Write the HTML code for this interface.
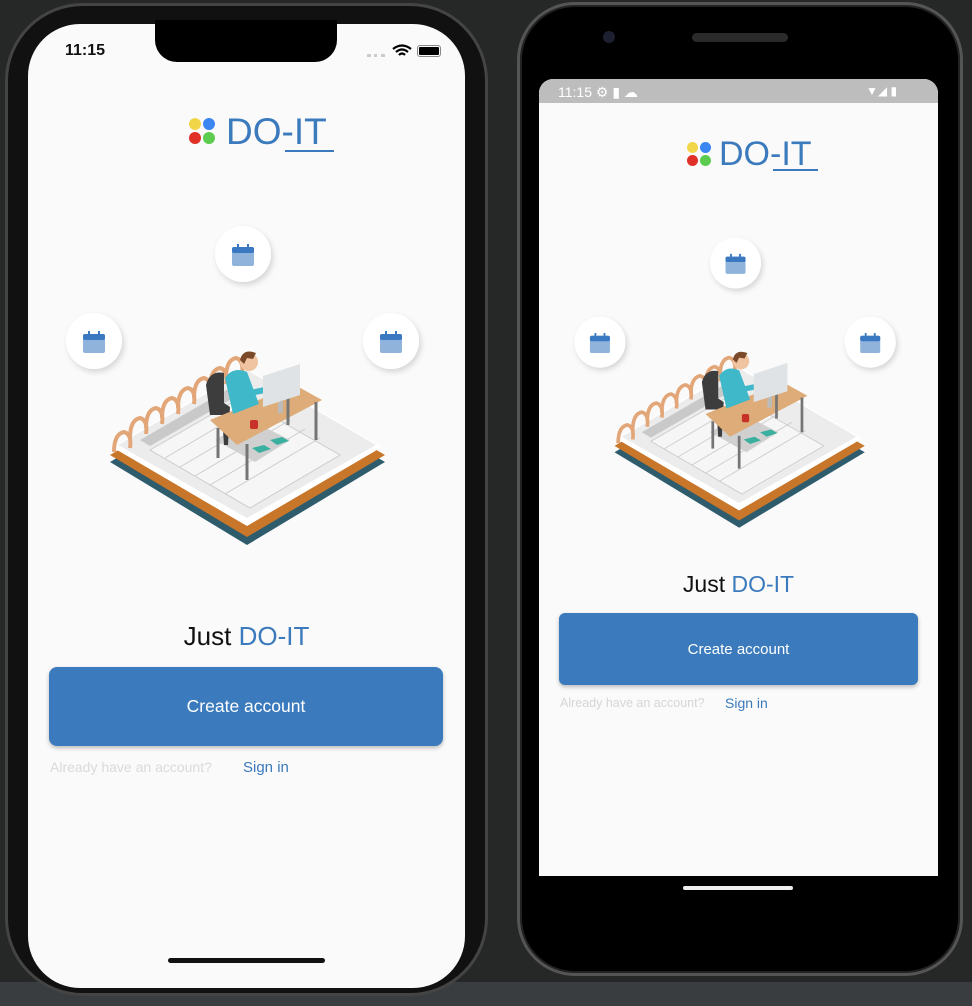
<!DOCTYPE html>
<html><head><meta charset="utf-8"><style>
*{margin:0;padding:0;box-sizing:border-box}
body{width:972px;height:1006px;background:#262727;position:relative;overflow:hidden;font-family:"Liberation Sans",sans-serif}
.a{position:absolute}
.btn{position:absolute;background:#3b7abc;color:#fff;display:flex;align-items:center;justify-content:center;font-weight:500;box-shadow:0 2px 4px rgba(0,0,0,.25)}
.blue{color:#3b7abc}
</style></head><body>
<div class="a" style="left:0;top:982px;width:972px;height:24px;background:#3a3d40"></div>
<!-- iPhone -->
<div class="a" style="left:5px;top:3px;width:483px;height:993px;border-radius:78px;background:#111;border:3px solid #444"></div>
<div class="a" style="left:28px;top:24px;width:437px;height:964px;border-radius:52px;background:#fafafa"></div>
<div class="a" style="left:155px;top:20px;width:182px;height:42px;background:#000;border-radius:0 0 22px 22px"></div>
<div class="a" style="left:65px;top:42px;font-size:16px;font-weight:bold;color:#111">11:15</div>
<div class="a" style="left:367px;top:54px;width:18px;height:3px;border-top:3px dotted #ccc"></div>
<svg class="a" style="left:392px;top:44px" width="20" height="14" viewBox="0 0 20 14"><path d="M1 5 Q10 -2 19 5 M4 8 Q10 3 16 8 M7 11 Q10 8 13 11" stroke="#000" stroke-width="2.2" fill="none"/></svg>
<div class="a" style="left:417px;top:45px;width:24px;height:12px;border:1.5px solid #888;border-radius:3px;padding:1px"><div style="width:100%;height:100%;background:#000;border-radius:1px"></div></div>
<div class="a" style="left:189px;top:118px;width:12px;height:12px;border-radius:50%;background:#f2d64a"></div>
<div class="a" style="left:203px;top:118px;width:12px;height:12px;border-radius:50%;background:#3b86f0"></div>
<div class="a" style="left:189px;top:132px;width:12px;height:12px;border-radius:50%;background:#e03128"></div>
<div class="a" style="left:203px;top:132px;width:12px;height:12px;border-radius:50%;background:#5ccc4e"></div>
<div class="a blue" style="left:226px;top:111px;font-size:37px;letter-spacing:0px">DO-IT</div>
<div class="a" style="left:285px;top:150px;width:49px;height:2px;background:#3b7abc"></div>
<div class="a" style="left:0;top:621px;width:493px;text-align:center;font-size:26px;color:#111">Just <span class="blue">DO-IT</span></div>
<div class="btn" style="left:49px;top:667px;width:394px;height:79px;border-radius:8px;font-size:17.5px">Create account</div>
<div class="a" style="left:50px;top:759px;font-size:14px;color:#dadada">Already have an account?</div>
<div class="a blue" style="left:243px;top:759px;font-size:15px">Sign in</div>
<div class="a" style="left:168px;top:958px;width:157px;height:5px;border-radius:3px;background:#111"></div>
<!-- Android -->
<div class="a" style="left:517px;top:2px;width:446px;height:974px;border-radius:58px;background:#000;border:3px solid #555;box-shadow:inset 0 0 0 2px #222"></div>
<div class="a" style="left:603px;top:31px;width:12px;height:12px;border-radius:50%;background:#1d2030"></div>
<div class="a" style="left:692px;top:33px;width:96px;height:9px;border-radius:5px;background:#2a2a2a"></div>
<div class="a" style="left:539px;top:79px;width:399px;height:797px;background:#fafafa;border-radius:14px 14px 0 0"></div>
<div class="a" style="left:539px;top:79px;width:399px;height:24px;background:#bdbdbd;border-radius:14px 14px 0 0"></div>
<div class="a" style="left:558px;top:84px;font-size:14px;color:#fff">11:15 ⚙ ▮ ☁</div>
<div class="a" style="left:866px;top:84px;font-size:12px;color:#fff">▼◢ ▮</div>
<div class="a" style="left:687px;top:142px;width:11px;height:11px;border-radius:50%;background:#f2d64a"></div>
<div class="a" style="left:700px;top:142px;width:11px;height:11px;border-radius:50%;background:#3b86f0"></div>
<div class="a" style="left:687px;top:155px;width:11px;height:11px;border-radius:50%;background:#e03128"></div>
<div class="a" style="left:700px;top:155px;width:11px;height:11px;border-radius:50%;background:#5ccc4e"></div>
<div class="a blue" style="left:719px;top:135px;font-size:34px">DO-IT</div>
<div class="a" style="left:773px;top:169px;width:45px;height:2px;background:#3b7abc"></div>
<div class="a" style="left:539px;top:571px;width:399px;text-align:center;font-size:23px;color:#111">Just <span class="blue">DO-IT</span></div>
<div class="btn" style="left:559px;top:613px;width:359px;height:72px;border-radius:6px;font-size:15px">Create account</div>
<div class="a" style="left:560px;top:696px;font-size:12.5px;color:#d6d6d6">Already have an account?</div>
<div class="a blue" style="left:725px;top:695px;font-size:14px">Sign in</div>
<div class="a" style="left:683px;top:886px;width:110px;height:4px;border-radius:2px;background:#eee"></div>
<svg class="a" style="left:0;top:0" width="972" height="1006">
<defs>
<filter id="sh" x="-50%" y="-50%" width="200%" height="200%"><feDropShadow dx="2" dy="3" stdDeviation="3" flood-opacity="0.15"/></filter>
<g id="cal"><rect x="-11" y="-8" width="22" height="19" rx="2" fill="#8fb3db"/><rect x="-11" y="-8" width="22" height="6" rx="2" fill="#3a78c2"/><rect x="-6" y="-11" width="2" height="5" fill="#3a78c2"/><rect x="4" y="-11" width="2" height="5" fill="#3a78c2"/></g>
<g id="ill">
<circle cx="243" cy="254" r="28" fill="#fff" filter="url(#sh)"/><use href="#cal" x="243" y="255"/>
<circle cx="94" cy="341" r="28" fill="#fff" filter="url(#sh)"/><use href="#cal" x="94" y="342"/>
<circle cx="391" cy="341" r="28" fill="#fff" filter="url(#sh)"/><use href="#cal" x="391" y="342"/>
<polygon points="110,462 247,382 385,462 247,545" fill="#2f5c6c"/>
<polygon points="110,455 247,375 385,455 247,537" fill="#c8762a"/>
<polygon points="112,447 247,368 382,447 247,526" fill="#fff"/>
<polygon points="118,445 247,370 376,445 247,518" fill="#ececec"/>
<polygon points="150,450 240,398 340,455 250,508" fill="#f6f6f6" stroke="#ccc" stroke-width="1"/>
<g stroke="#ccc" stroke-width="1"><line x1="165" y1="458" x2="260" y2="402"/><line x1="180" y1="467" x2="275" y2="411"/><line x1="195" y1="476" x2="290" y2="420"/><line x1="210" y1="485" x2="305" y2="429"/><line x1="225" y1="494" x2="320" y2="438"/></g>
<polygon points="140,440 230,388 240,394 150,446" fill="#c9c9c9"/>
<polygon points="215,440 250,420 290,440 255,462" fill="#d0d0d0"/>
<g fill="none" stroke="#e2a679" stroke-width="4"><path d="M114 452 q0-18 10-20 q8 2 6 16"/><path d="M130 438 q0-18 10-20 q8 2 6 16"/><path d="M146 428 q0-18 10-20 q8 2 6 16"/><path d="M162 418 q0-18 10-20 q8 2 6 16"/><path d="M178 408 q0-18 10-20 q8 2 6 16"/><path d="M194 398 q0-18 10-20 q8 2 6 16"/><path d="M210 388 q0-18 10-20 q8 2 6 16"/><path d="M226 378 q0-18 10-20 q8 2 6 16"/></g>
<path d="M206 385 q4-15 18-12 l0 30 l6 4 l-2 38 l-4 0 l-2 -30 l-12 0 z" fill="#3d3d3d"/>
<polygon points="210,420 295,385 322,400 237,445" fill="#ddac78"/>
<g stroke="#757575" stroke-width="3"><line x1="218" y1="428" x2="218" y2="458"/><line x1="247" y1="444" x2="247" y2="480"/><line x1="316" y1="402" x2="316" y2="440"/><line x1="288" y1="390" x2="288" y2="425"/></g>
<path d="M225 378 q8-12 22-6 l12 32 l-26 10 z" fill="#3fb8c9"/>
<path d="M240 395 l25 -5" stroke="#3fb8c9" stroke-width="6"/>
<circle cx="249" cy="362" r="9" fill="#f0c4a0"/><path d="M240 360 q3-12 16-7 l-3 6 l-6 -1 l-3 6 z" fill="#7a4a2a"/>
<polygon points="263,376 300,364 300,395 263,407" fill="#dfe3e5"/>
<polygon points="278,403 283,400 283,412 278,414" fill="#bbb"/>
<path d="M252 448 l12 -3 l7 4 l-12 4 z" fill="#3bb0a0"/>
<path d="M270 440 l12 -3 l7 4 l-12 4 z" fill="#3bb0a0"/>
<rect x="250" y="420" width="8" height="9" rx="2" fill="#c8302a"/>
</g>
</defs>
<use href="#ill"/>
<use href="#ill" transform="translate(569,232) scale(0.91) translate(-60,-220)"/>
</svg>
</body></html>
